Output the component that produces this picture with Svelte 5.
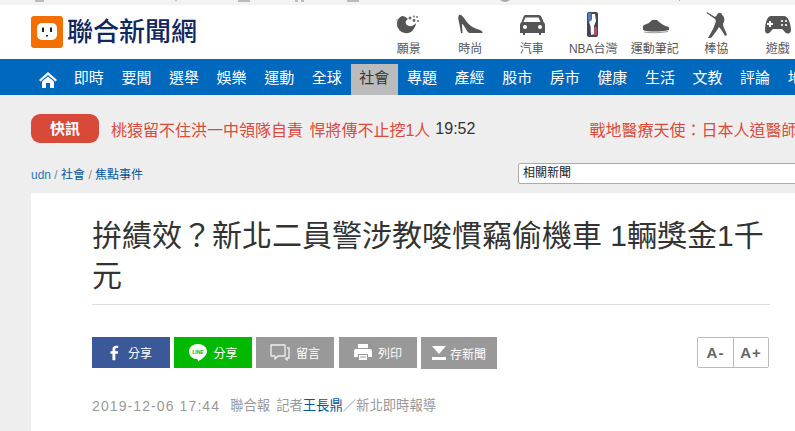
<script lang="ts">
  const navItems = ['即時', '要聞', '選舉', '娛樂', '運動', '全球', '社會', '專題', '產經', '股市', '房市', '健康', '生活', '文教', '評論', '地方'];
  const channels = ['願景', '時尚', '汽車', 'NBA台灣', '運動筆記', '棒協', '遊戲'];
</script>

<div class="page">
  <svg class="top-strip" width="795" height="5" viewBox="0 0 795 5" aria-hidden="true">
    <path d="M35 0v2h9V0M175 0l1 2 1-2M238 0v2h12V0M295 0h3v2h-3zM301 0h3v2h-3zM347 0v2h12V0" fill="#bbb" />
    <path d="M500 0q5 4 10 0zM679 0h1v1h-1z" fill="#aaa" />
  </svg>

  <header class="brand-bar">
    <div class="logo">
      <svg width="32" height="32" viewBox="0 0 32 32" aria-hidden="true">
        <rect width="32" height="32" rx="3" fill="#f36f00" />
        <rect x="6" y="7" width="20" height="17" rx="5" fill="#fff" />
        <rect x="11" y="11.500" width="2" height="4.500" fill="#222" />
        <rect x="19" y="11.500" width="2" height="4.500" fill="#222" />
        <rect x="15" y="19" width="2" height="1.500" fill="#222" />
      </svg>
      <span class="logo-text">聯合新聞網</span>
    </div>

    <ul class="channels">
      {#each channels as name, i}
        <li class="channel">
          <svg class="channel-icon" width="30" height="28" viewBox="0 0 30 28" aria-hidden="true">
            {#if i === 0}
              <path d="M8 4C3 6 2 12 4 16C7 22 15 23 19 18C21 15 22 13 22 11C19 15 14 15 12 12C11 10 12 8 14 7C12 5 10 4 8 4Z" fill="#555" />
              <circle cx="16" cy="6" r="1.500" fill="#666" />
              <circle cx="20" cy="4.500" r="1" fill="#777" />
              <circle cx="23" cy="5" r="1" fill="#777" />
              <circle cx="20" cy="8.500" r="1.400" fill="#666" />
              <circle cx="24" cy="9" r="1" fill="#777" />
              <circle cx="3" cy="8" r="0.800" fill="#e09a50" />
            {:else if i === 1}
              <path d="M4 3C5 2 7 3 9 6C12 11 17 16 25 18C28 19 28 21 27 21L15 21C13 21 12 19 11 17C9 14 8 12 7 12L7.500 21L6 21L4 10C3 7 3 5 4 3Z" fill="#555" />
            {:else if i === 2}
              <path d="M8 3H22Q24 3 25 6L26.500 10Q28 11 28 13V21H24V23H22V21H8V23H6V21H3V13Q3 11 4.500 10L6 6Q7 3 8 3Z" fill="#555" />
              <path d="M8.500 5.500H21.500L23.500 10H6.500Z" fill="#fff" />
              <circle cx="8" cy="15" r="2" fill="#fff" />
              <circle cx="23" cy="15" r="2" fill="#fff" />
            {:else if i === 3}
              <rect x="9" y="0" width="11" height="25" rx="2" fill="#445" />
              <path d="M14 2L17 2L18 9L16 14L17 22L13 23L12.500 14L11 10L14 7Z" fill="#fff" />
              <rect x="10" y="1" width="3.500" height="8" fill="#5580b0" />
              <rect x="16" y="15" width="3" height="8" fill="#a56" />
            {:else if i === 4}
              <path d="M3 14C5 12 9 12 12 8L17 8C20 11 24 14 29 15L29 18C20 20 8 20 3 18Z" fill="#555" />
              <path d="M4 20C10 21 20 21 28 19.500" stroke="#999" stroke-width="1" fill="none" />
            {:else if i === 5}
              <path d="M6 0L14 5L16 3C17 0 21 0 21 3C24 5 24 9 22 12C22 15 25 19 26 23L24 24C22 20 20 17 18 15C16 19 13 22 10 26L7 26C9 22 12 18 14 12C15 10 15 8 14 7L5.500 1Z" fill="#555" />
            {:else}
              <path d="M8 4H21C25 4 28 12 28 18C28 22 24 23 21 19L19 17H10L8 19C5 23 2 22 2 18C2 12 4 4 8 4Z" fill="#555" />
              <path d="M6 9h2v2h2v2H8v2H6v-2H4v-2h2z" fill="#fff" />
              <circle cx="19" cy="9" r="1.100" fill="#fff" />
              <circle cx="23" cy="9" r="1.100" fill="#fff" />
              <circle cx="19" cy="13" r="1.100" fill="#fff" />
              <circle cx="23" cy="13" r="1.100" fill="#fff" />
            {/if}
          </svg>
          <span class="channel-name">{name}</span>
        </li>
      {/each}
    </ul>
  </header>

  <nav class="main-nav">
    <a class="home" href="#home" aria-label="首頁">
      <svg width="18" height="16" viewBox="0 0 18 16" aria-hidden="true">
        <path d="M9 0L18 8L16.500 9.500L9 3L1.500 9.500L0 8Z" fill="#fff" />
        <path d="M3 9.500L9 4.500L15 9.500V16H11V11H7V16H3Z" fill="#fff" />
      </svg>
    </a>
    {#each navItems as item}
      <a class="nav-item" class:active={item === '社會'} href="#nav">{item}</a>
    {/each}
  </nav>

  <section class="ticker">
    <span class="badge">快訊</span>
    <span class="headline">桃猿留不住洪一中領隊自責 悍將傳不止挖1人</span>
    <span class="time">19:52</span>
    <span class="headline second">戰地醫療天使：日本人道醫師中村哲</span>
  </section>

  <div class="crumb-row">
    <div class="breadcrumb">
      <a class="udn" href="#udn">udn</a> / <a href="#cat">社會</a> / <a href="#focus">焦點事件</a>
    </div>
    <select class="related">
      <option>相關新聞</option>
    </select>
  </div>

  <main class="card">
    <article class="article">
      <h1>拚績效？新北二員警涉教唆慣竊偷機車 1輛獎金1千元</h1>

      <div class="toolbar">
        <a class="btn fb" href="#fb">
          <svg width="9" height="16" viewBox="0 0 11 18" aria-hidden="true">
            <path d="M3 18V10H0.500V7H3V4.500C3 1.500 5 0 7.500 0H10V3H8C7 3 6.500 3.500 6.500 4.500V7H10L9.500 10H6.500V18Z" fill="#fff" />
          </svg>
          分享
        </a>
        <a class="btn line" href="#line">
          <svg width="20" height="18" viewBox="0 0 20 18" aria-hidden="true">
            <path d="M10 0C15 0 19 3 19 7.500C19 11 15 14.500 10 17.500C10 15.500 9.500 15 8 15C4 14.500 1 11.500 1 7.500C1 3 5 0 10 0Z" fill="#fff" />
            <text x="10" y="9.500" text-anchor="middle" font-size="5" font-weight="700" fill="#00b900" font-family="Liberation Sans, sans-serif">LINE</text>
          </svg>
          分享
        </a>
        <a class="btn grey" href="#comment">
          <svg width="20" height="17" viewBox="0 0 20 17" aria-hidden="true">
            <path d="M1 1H15V12H8L5 15V12H1Z" fill="none" stroke="#eee" stroke-width="1.300" stroke-linejoin="round" />
            <path d="M17 4H19V14H17V16L15 14" fill="none" stroke="#eee" stroke-width="1.300" />
          </svg>
          留言
        </a>
        <a class="btn grey" href="#print">
          <svg width="18" height="17" viewBox="0 0 18 17" aria-hidden="true">
            <path d="M4 0H14V4H4Z" fill="#fff" />
            <path d="M2 5H16Q18 5 18 7V13H14V10H4V13H0V7Q0 5 2 5Z" fill="#fff" />
            <path d="M5 11H13V16H5Z" fill="#fff" />
            <rect x="6" y="12.500" width="6" height="1" fill="#999" />
          </svg>
          列印
        </a>
        <a class="btn grey save" href="#save">
          <svg width="14" height="14" viewBox="0 0 14 14" aria-hidden="true">
            <path d="M0 0H14L7 8Z" fill="#fff" />
            <rect y="11" width="14" height="3" fill="#fff" />
          </svg>
          存新聞
        </a>

        <div class="font-size">
          <button type="button">A-</button>
          <button type="button">A+</button>
        </div>
      </div>

      <p class="meta">
        <span class="date">2019-12-06 17:44</span>
        <span class="source">聯合報</span>
        <span>記者<a href="#author">王長鼎</a>／新北即時報導</span>
      </p>
    </article>
  </main>
</div>

<style>
  :global(body) {
    margin: 0;
    background: #eeeeee;
  }

  .page {
    width: 795px;
    height: 431px;
    overflow: hidden;
    font-family: "Liberation Sans", "Noto Sans CJK TC", sans-serif;
  }

  a {
    color: inherit;
    text-decoration: none;
  }

  .top-strip {
    display: block;
    background: #f3f3f3;
  }

  .brand-bar {
    display: flex;
    height: 54px;
    background: #fff;
  }

  .logo {
    display: flex;
    align-items: center;
    gap: 4px;
    width: 378px;
    flex: none;
    padding: 11px 0 11px 31px;
    box-sizing: border-box;
  }

  .logo svg {
    flex: none;
  }

  .logo-text {
    color: #12275f;
    font-size: 26px;
    line-height: 32px;
    font-weight: 500;
    white-space: nowrap;
  }

  .channels {
    display: flex;
    margin: 0;
    padding: 0;
    list-style: none;
  }

  .channel {
    display: flex;
    flex-direction: column;
    align-items: center;
    width: 61.500px;
    flex: none;
  }

  .channel-icon {
    margin-top: 7px;
    flex: none;
  }

  .channel-name {
    color: #555;
    font-size: 12px;
    line-height: 14px;
    margin-top: 2px;
    white-space: nowrap;
  }

  .main-nav {
    display: flex;
    align-items: flex-end;
    height: 36px;
    background: #0068bd;
    padding-left: 31px;
  }

  .home {
    display: flex;
    align-items: center;
    justify-content: center;
    width: 34px;
    height: 31px;
    flex: none;
  }

  .nav-item {
    width: 47.600px;
    height: 31px;
    flex: none;
    color: #fff;
    font-size: 15px;
    line-height: 28px;
    text-align: center;
    white-space: nowrap;
  }

  .nav-item.active {
    background: #bbbbbb;
    color: #333;
  }

  .ticker {
    display: flex;
    align-items: center;
    height: 29px;
    margin-top: 19px;
    padding-left: 31px;
    white-space: nowrap;
  }

  .badge {
    width: 68px;
    height: 29px;
    flex: none;
    background: #d9493a;
    border-radius: 9px;
    color: #fff;
    font-size: 15px;
    font-weight: 700;
    line-height: 29px;
    text-align: center;
  }

  .headline {
    flex: none;
    margin-left: 12px;
    color: #dc4a3c;
    font-size: 16px;
    word-spacing: 2px;
  }

  .headline.second {
    margin-left: 114px;
  }

  .time {
    flex: none;
    margin-left: 5px;
    color: #333;
    font-size: 16px;
  }

  .crumb-row {
    display: flex;
    align-items: center;
    height: 20px;
    margin-top: 20px;
    padding-left: 31px;
  }

  .breadcrumb {
    width: 487px;
    flex: none;
    color: #888;
    font-size: 12px;
  }

  .breadcrumb a {
    color: #00569b;
  }

  .breadcrumb .udn {
    color: #2a78b8;
  }

  .related {
    width: 300px;
    height: 21px;
    flex: none;
    padding: 0;
    background: #fff;
    border: 1px solid #aaa;
    border-radius: 2px;
    color: #222;
    font-family: inherit;
    font-size: 12px;
  }

  .card {
    margin: 10px 0 0 31px;
    padding: 0 0 20px 61px;
    background: #fff;
    height: 238px;
  }

  .article {
    width: 678px;
  }

  h1 {
    margin: 0;
    padding: 23px 0 8px;
    border-bottom: 1px solid #dddddd;
    color: #333;
    font-size: 30px;
    font-weight: 400;
    line-height: 40px;
  }

  .toolbar {
    display: flex;
    align-items: flex-start;
    gap: 4px;
    margin-top: 32px;
  }

  .btn {
    display: flex;
    align-items: center;
    justify-content: center;
    gap: 6px;
    width: 78px;
    height: 31px;
    flex: none;
    color: #fff;
    font-size: 12px;
  }

  .fb {
    background: #3b5998;
    gap: 9px;
  }

  .line {
    background: #00b900;
    gap: 5px;
  }

  .grey {
    background: #999999;
  }

  .grey + .grey {
    margin-left: 1px;
  }

  .save {
    width: 76px;
    height: 32px;
    gap: 4px;
    margin-left: 0 !important;
  }

  .font-size {
    display: flex;
    margin-left: auto;
    margin-right: 1px;
    height: 31px;
    box-sizing: border-box;
    border: 1px solid #bbb;
    border-radius: 2px;
  }

  .font-size button {
    width: 35px;
    padding: 0;
    background: #fff;
    border: 0;
    color: #666;
    font-family: inherit;
    font-size: 15px;
    font-weight: 700;
    letter-spacing: 1px;
  }

  .font-size button + button {
    border-left: 1px solid #bbb;
  }

  .meta {
    display: flex;
    gap: 10px;
    margin: 28px 0 0;
    color: #999;
    font-size: 13.330px;
    line-height: 18px;
    white-space: nowrap;
  }

  .date {
    font-size: 14px;
    letter-spacing: 1.100px;
  }

  .source {
    margin-right: -4px;
  }

  .meta a {
    color: #00569b;
  }
</style>
